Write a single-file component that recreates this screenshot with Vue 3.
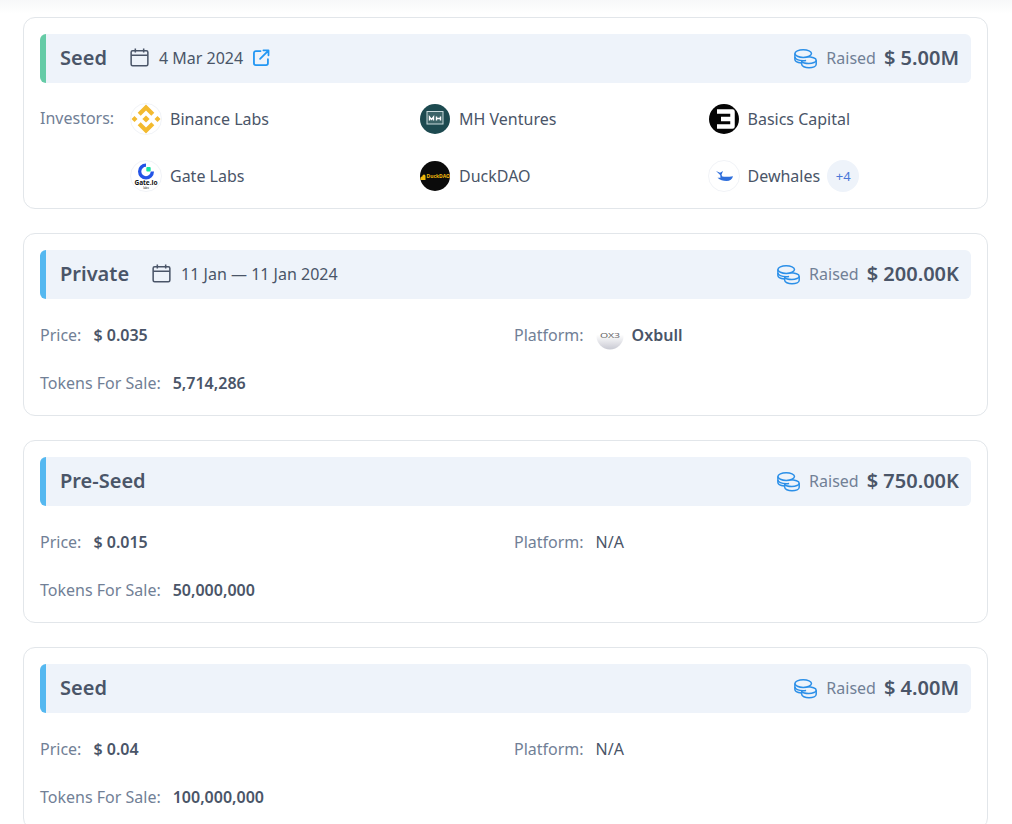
<script setup>
const rounds = [
  {
    id: 1, name: 'Seed', date: '4 Mar 2024', link: true, bar: '#65cba6', raised: '$ 5.00M',
    investors: [
      { name: 'Binance Labs', logo: 'binance' },
      { name: 'MH Ventures', logo: 'mh' },
      { name: 'Basics Capital', logo: 'basics' },
      { name: 'Gate Labs', logo: 'gate' },
      { name: 'DuckDAO', logo: 'duck' },
      { name: 'Dewhales', logo: 'whale', more: '+4' }
    ]
  },
  { id: 2, name: 'Private', date: '11 Jan — 11 Jan 2024', bar: '#55b8f0', raised: '$ 200.00K', price: '$ 0.035', platform: 'Oxbull', tokens: '5,714,286' },
  { id: 3, name: 'Pre-Seed', bar: '#55b8f0', raised: '$ 750.00K', price: '$ 0.015', platform: 'N/A', tokens: '50,000,000' },
  { id: 4, name: 'Seed', bar: '#55b8f0', raised: '$ 4.00M', price: '$ 0.04', platform: 'N/A', tokens: '100,000,000' }
]
</script>

<template>
  <div class="page">
    <div class="top-fade"></div>
    <div v-for="r in rounds" :key="r.id" class="card">
      <div class="head" :style="{ borderLeftColor: r.bar }">
        <span class="title">{{ r.name }}</span>
        <template v-if="r.date">
          <svg class="cal" viewBox="0 0 20 20" fill="none" stroke="#4a5568" stroke-width="1.6">
            <rect x="1.200" y="3" width="17.600" height="15.800" rx="1.600" />
            <path d="M1.200 7.600h17.600M5.600 .6v4.200M14.400 .6v4.200" />
          </svg>
          <span class="date">{{ r.date }}</span>
        </template>
        <svg v-if="r.link" class="ext" viewBox="0 0 18 18" fill="none" stroke="#2196f3" stroke-width="1.900" stroke-linecap="round" stroke-linejoin="round">
          <path d="M8 2.200H3a2 2 0 0 0-2 2V15a2 2 0 0 0 2 2h10.800a2 2 0 0 0 2-2v-4.200" />
          <path d="M7.500 10.500 16 2M11 1.400h5.400v5.200" />
        </svg>
        <div class="raised">
          <svg class="coins" viewBox="0 0 23 20" fill="none" stroke="#2b8fe8" stroke-width="1.500">
            <ellipse cx="9.200" cy="4.600" rx="8.300" ry="3.800" />
            <path d="M.9 4.600v3.400c0 2.100 3.700 3.700 8.300 3.700 1 0 2-.1 2.900-.2" />
            <path d="M.9 8v2.600c0 1.700 2.900 3.100 6.500 3.500" />
            <path d="M13 7.800c5 0 9.200 1.500 9.200 3.400 0 1.900-3.400 3.300-7.400 3.300-3.200 0-6-.7-7-2" />
            <path d="M7.700 11.500v3.700c0 2 3.300 3.500 7.300 3.500s7.200-1.500 7.200-3.500v-4" />
          </svg>
          <span class="raised-label">Raised</span>
          <span class="raised-value">{{ r.raised }}</span>
        </div>
      </div>

      <div v-if="r.investors" class="investors">
        <span class="inv-label">Investors:</span>
        <div class="inv-grid">
          <div v-for="inv in r.investors" :key="inv.name" class="inv">
            <svg v-if="inv.logo === 'binance'" class="logo" viewBox="0 0 32 32">
              <circle cx="16" cy="16" r="15.500" fill="#fff" stroke="#f1f3f7" />
              <g fill="#f3ba2f">
                <path d="M16 1.500l8.300 8.300-3 3L16 7.500l-5.300 5.300-3-3z" />
                <path d="M16 30.500l-8.300-8.300 3-3 5.300 5.300 5.300-5.300 3 3z" />
                <path d="M1.500 16l3-3 3 3-3 3zM24.500 16l3-3 3 3-3 3z" />
                <path d="M16 12.400l3.600 3.600-3.600 3.600-3.600-3.600z" />
              </g>
            </svg>
            <svg v-else-if="inv.logo === 'mh'" class="logo" viewBox="0 0 32 32">
              <circle cx="16" cy="16" r="15" fill="#1d4a50" />
              <rect x="8" y="8.500" width="16" height="12.500" fill="#3c6468" stroke="#c7d8da" stroke-width="1" />
              <path d="M10.500 17.500v-3.500l2 2.500 2-2.500v3.500M17.500 13.500v4M21.500 13.500v4M17.500 15.500h4" fill="none" stroke="#fff" stroke-width="1.400" />
            </svg>
            <svg v-else-if="inv.logo === 'basics'" class="logo" viewBox="0 0 32 32">
              <circle cx="16" cy="16" r="15" fill="#050505" />
              <path d="M9 8.500h15.500v15H9M13 16h11.500" fill="none" stroke="#fff" stroke-width="4.500" stroke-linejoin="round" />
            </svg>
            <svg v-else-if="inv.logo === 'gate'" class="logo" viewBox="0 0 32 32">
              <circle cx="16" cy="16" r="15.500" fill="#fff" stroke="#f1f3f7" />
              <path d="M16 3.500a8 8 0 1 0 8 8h-3.300a4.700 4.700 0 1 1-4.700-4.700z" fill="#2354e6" />
              <rect x="16.300" y="7" width="4.400" height="4.400" rx="1" fill="#17e6a1" />
              <text x="16" y="24.500" class="gate-text">Gate.io</text>
              <text x="16" y="28.500" class="gate-sub">labs</text>
            </svg>
            <svg v-else-if="inv.logo === 'duck'" class="logo" viewBox="0 0 32 32">
              <circle cx="16" cy="16" r="15" fill="#0b0b0b" />
              <path d="M1.500 18.500c0-1.500 1-2 1.800-2 .1-1.200.8-2 1.700-2s1.500.8 1.500 1.900V20H1.500z" fill="#f0b90b" />
              <text x="7.500" y="18" class="duck-text">DuckDAO</text>
            </svg>
            <svg v-else class="logo" viewBox="0 0 32 32">
              <circle cx="16" cy="16" r="15.500" fill="#fff" stroke="#f1f3f7" />
              <path d="M8 11l4 1.800L15 11l-1.500 3.800.8 1.800c3 .4 6.700.3 10.700-.3-.7 2.900-3 4.700-6.500 4.700-3.500 0-6.500-1-9-3.300h3l-.3-2.700z" fill="#2f6fdc" />
            </svg>
            <span class="inv-name">{{ inv.name }}</span>
            <span v-if="inv.more" class="more">{{ inv.more }}</span>
          </div>
        </div>
      </div>

      <div v-else class="details">
        <div class="detail">
          <span class="label">Price:</span>
          <span class="value">{{ r.price }}</span>
        </div>
        <div class="detail">
          <span class="label">Platform:</span>
          <svg v-if="r.platform === 'Oxbull'" class="logo small" viewBox="0 0 28 28">
            <defs>
              <linearGradient id="oxb" x1="0" y1="0" x2="0" y2="1">
                <stop offset="0.450" stop-color="#fff" />
                <stop offset="1" stop-color="#c9cad3" />
              </linearGradient>
            </defs>
            <circle cx="14" cy="14" r="13.500" fill="url(#oxb)" />
            <text x="14" y="16" class="ox-text" textLength="20" lengthAdjust="spacingAndGlyphs">OX3</text>
          </svg>
          <span :class="r.platform === 'Oxbull' ? 'value' : 'plain'">{{ r.platform }}</span>
        </div>
        <div class="detail">
          <span class="label">Tokens For Sale:</span>
          <span class="value">{{ r.tokens }}</span>
        </div>
      </div>
    </div>
  </div>
</template>

<style>
html, body {
  overflow: hidden;
  background: #fff;
}
</style>

<style scoped>
.page {
  position: relative;
  height: 824px;
  overflow: hidden;
  box-sizing: border-box;
  padding: 17px 24px 0 23px;
  display: flex;
  flex-direction: column;
  gap: 24px;
  font-family: "Noto Sans", sans-serif;
  font-size: 16px;
  color: #4a5568;
}
.top-fade {
  position: absolute;
  top: 0;
  left: 0;
  right: 0;
  height: 14px;
  background: linear-gradient(#f7f8f9, #fff);
}
.card {
  position: relative;
  flex: none;
  border: 1px solid #e2e6ea;
  border-radius: 12px;
  padding: 16px;
  background: #fff;
}
.head {
  display: flex;
  align-items: center;
  height: 49px;
  box-sizing: border-box;
  padding: 0 12px 2px 14px;
  background: #eef3fa;
  border-left: 6px solid #55b8f0;
  border-radius: 6px;
}
.title {
  font-size: 20px;
  font-weight: 600;
  color: #4a5568;
}
.cal {
  width: 19px;
  height: 19px;
  margin-left: 23px;
}
.date {
  margin-left: 10px;
}
.ext {
  width: 17px;
  height: 17px;
  margin-left: 10px;
}
.raised {
  margin-left: auto;
  display: flex;
  align-items: center;
}
.coins {
  width: 23px;
  height: 20px;
  margin-top: 2px;
}
.raised-label {
  margin-left: 9px;
  color: #718096;
}
.raised-value {
  margin-left: 8px;
  font-size: 20px;
  font-weight: 600;
}
.investors {
  display: flex;
  margin-top: 20px;
}
.inv-label {
  width: 90px;
  flex: none;
  color: #718096;
  line-height: 30px;
}
.inv-grid {
  flex: 1;
  display: grid;
  grid-template-columns: 289px 288.500px 1fr;
  row-gap: 25px;
}
.inv {
  display: flex;
  align-items: center;
  height: 32px;
}
.logo {
  width: 32px;
  height: 32px;
  flex: none;
}
.logo.small {
  width: 28px;
  height: 28px;
  margin-left: 12px;
  margin-top: 2px;
}
.inv-name {
  margin-left: 8px;
}
.more {
  margin-left: 7px;
  width: 32px;
  height: 32px;
  border-radius: 50%;
  background: #eef3fa;
  color: #4a78d8;
  font-size: 13px;
  display: flex;
  align-items: center;
  justify-content: center;
}
.gate-text {
  font-size: 6.500px;
  font-weight: 700;
  text-anchor: middle;
  fill: #111;
}
.gate-sub {
  font-size: 3px;
  text-anchor: middle;
  fill: #222;
}
.duck-text {
  font-size: 5px;
  font-weight: 700;
  fill: #f0b90b;
}
.ox-text {
  font-size: 7px;
  text-anchor: middle;
  fill: #666;
}
.details {
  display: grid;
  grid-template-columns: 474px 1fr;
  row-gap: 20px;
  margin-top: 22px;
  padding-bottom: 2px;
}
.detail {
  display: flex;
  align-items: center;
  height: 28px;
}
.label {
  color: #718096;
}
.value {
  margin-left: 12px;
  font-weight: 600;
}
.plain {
  margin-left: 12px;
}
.logo.small + .value {
  margin-left: 8px;
}
</style>
